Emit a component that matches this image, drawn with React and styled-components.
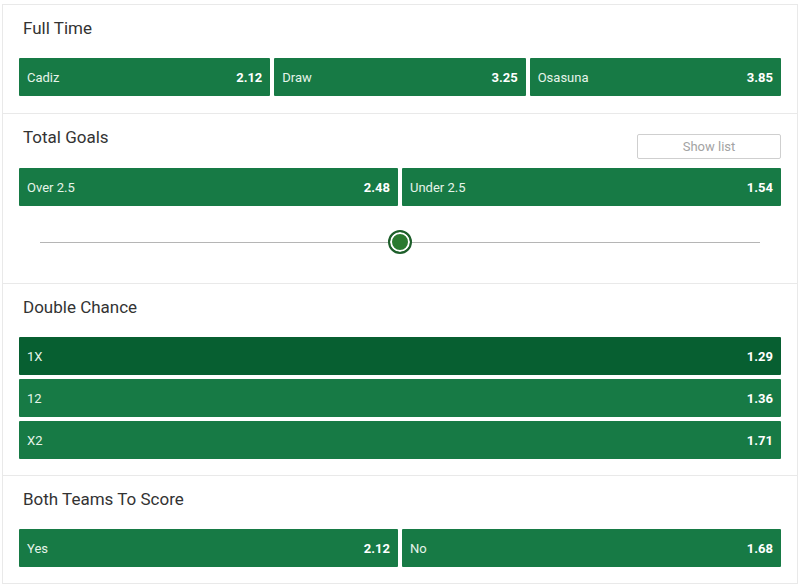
import React from "react";
import styled, { createGlobalStyle } from "styled-components";

const Global = createGlobalStyle`
  html, body { margin: 0; padding: 0; background: #ffffff; }
  body { font-family: Roboto, "Liberation Sans", Arial, sans-serif; }
  * { box-sizing: border-box; }
`;

const Page = styled.div`
  padding-top: 4px;
  padding-left: 2px;
  width: 800px;
`;

const Card = styled.div`
  width: 796px;
  border: 1px solid #e9e9e9;
  background: #fff;
`;

const Section = styled.section`
  padding: 11px 16px ${(p) => p.$pb || 16}px;
  border-bottom: 1px solid #e9e9e9;
  &:last-child { border-bottom: none; }
`;

const Header = styled.div`
  height: 24px;
  margin-bottom: ${(p) => p.$gap || 18}px;
  display: flex;
  justify-content: space-between;
  align-items: flex-start;
`;

const Title = styled.h2`
  margin: 0;
  padding-left: 4px;
  font-size: 17px;
  line-height: 24px;
  font-weight: 400;
  color: #333333;
`;

const ShowList = styled.button`
  margin-top: 9px;
  width: 144px;
  height: 25px;
  border: 1px solid #cfcfcf;
  border-radius: 2px;
  background: #fff;
  color: #a3a3a3;
  font-family: inherit;
  font-size: 13px;
  padding: 0;
`;

const Row = styled.div`
  display: grid;
  grid-template-columns: repeat(${(p) => p.cols}, 1fr);
  gap: 4px;
`;

const Stack = styled.div`
  display: flex;
  flex-direction: column;
  gap: 4px;
`;

const Odd = styled.div`
  height: 38px;
  display: flex;
  align-items: center;
  justify-content: space-between;
  padding: 0 8px;
  background: ${(p) => (p.$active ? "#075f31" : "#177a45")};
  border-radius: 1px;
  color: #ffffff;
  font-size: 13px;
`;

const Label = styled.span`
  color: #e6f4ea;
  font-weight: 400;
`;

const Price = styled.span`
  font-weight: 700;
  color: #ffffff;
`;

const SliderWrap = styled.div`
  margin-top: 24px;
  margin-bottom: 13px;
  padding: 0 21px;
  height: 24px;
  display: flex;
  align-items: center;
`;

const Track = styled.div`
  position: relative;
  flex: 1;
  height: 1px;
  background: #b5b5b5;
`;

const Thumb = styled.div`
  position: absolute;
  top: 50%;
  width: 24px;
  height: 24px;
  margin-left: -12px;
  margin-top: -12px;
  border-radius: 50%;
  border: 2px solid #1d5e2a;
  background: #2a7a2f;
  box-shadow: inset 0 0 0 2px #ffffff;
`;

const OddButton = ({ label, price, active }) => (
  <Odd $active={active}>
    <Label>{label}</Label>
    <Price>{price}</Price>
  </Odd>
);

export default function App() {
  const sliderPos = 50;
  return (
    <>
      <Global />
      <Page>
        <Card>
          <Section $pb={17}>
            <Header>
              <Title>Full Time</Title>
            </Header>
            <Row cols={3}>
              <OddButton label="Cadiz" price="2.12" />
              <OddButton label="Draw" price="3.25" />
              <OddButton label="Osasuna" price="3.85" />
            </Row>
          </Section>
          <Section>
            <Header $gap={19}>
              <Title>Total Goals</Title>
              <ShowList>Show list</ShowList>
            </Header>
            <Row cols={2}>
              <OddButton label="Over 2.5" price="2.48" />
              <OddButton label="Under 2.5" price="1.54" />
            </Row>
            <SliderWrap>
              <Track>
                <Thumb style={{ left: `${sliderPos}%` }} />
              </Track>
            </SliderWrap>
          </Section>
          <Section>
            <Header>
              <Title>Double Chance</Title>
            </Header>
            <Stack>
              <OddButton label="1X" price="1.29" active />
              <OddButton label="12" price="1.36" />
              <OddButton label="X2" price="1.71" />
            </Stack>
          </Section>
          <Section>
            <Header>
              <Title>Both Teams To Score</Title>
            </Header>
            <Row cols={2}>
              <OddButton label="Yes" price="2.12" />
              <OddButton label="No" price="1.68" />
            </Row>
          </Section>
        </Card>
      </Page>
    </>
  );
}
